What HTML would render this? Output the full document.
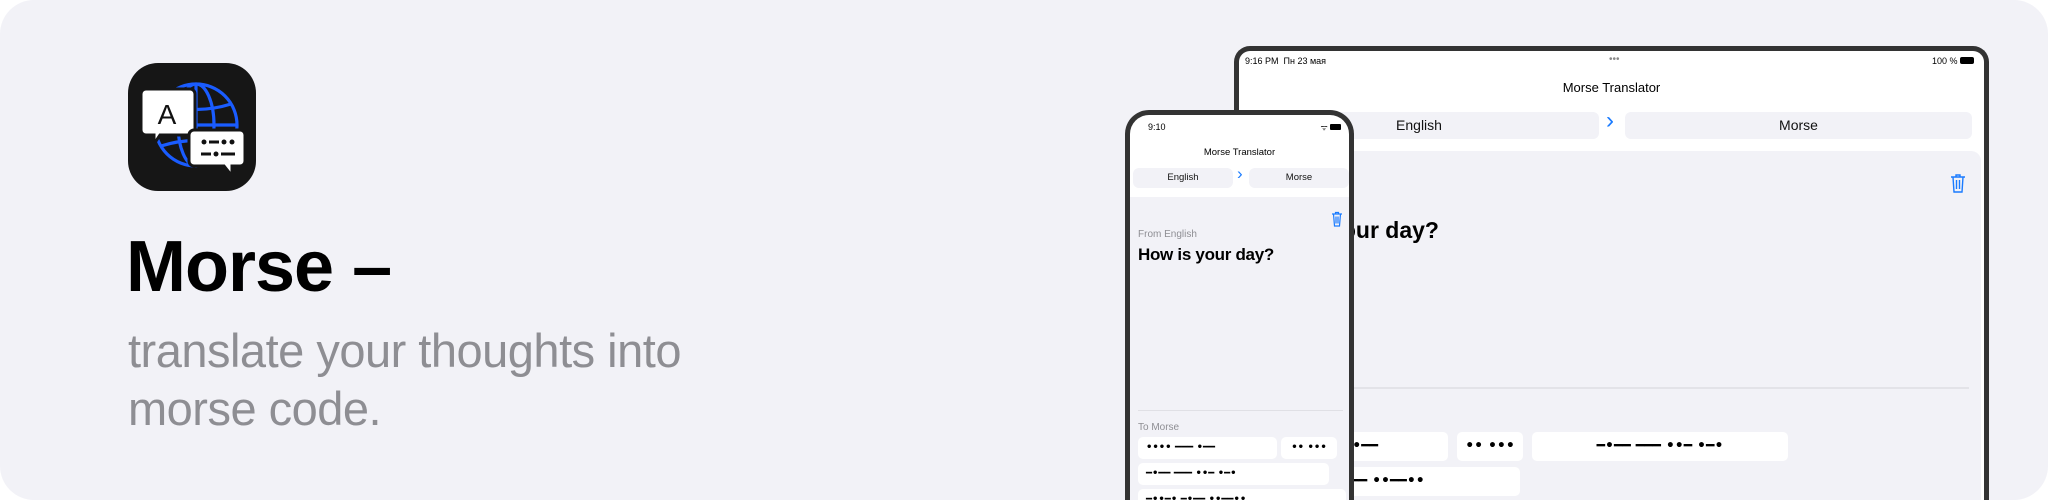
<!DOCTYPE html>
<html><head><meta charset="utf-8"><style>
*{margin:0;padding:0;box-sizing:border-box}
html,body{width:2048px;height:500px;overflow:hidden}
body{background:#fff;font-family:"Liberation Sans",sans-serif}
.bg{position:absolute;left:0;top:0;width:2048px;height:500px;background:#f2f2f7;border-radius:34px;overflow:hidden}
.abs{position:absolute}
.t{position:absolute;white-space:nowrap}
.chip{position:absolute;background:#fff;border-radius:5px;color:#000;white-space:nowrap;font-family:"DejaVu Sans",sans-serif;font-weight:bold;overflow:hidden}
.seg{position:absolute;background:#f2f2f7;border-radius:6px;text-align:center;color:#111}
</style></head><body><div class="bg">

<svg class="abs" style="left:128px;top:63px" width="128" height="128" viewBox="0 0 128 128">
<rect width="128" height="128" rx="30" fill="#161616"/>
<g fill="none" stroke="#1a5cff" stroke-width="3.2">
<circle cx="68" cy="62" r="41"/>
<ellipse cx="68" cy="62" rx="18" ry="41"/>
<line x1="68" y1="21" x2="68" y2="103"/>
<line x1="27" y1="62" x2="109" y2="62"/>
<path d="M33 41 Q68 52 103 41"/><path d="M33 83 Q68 72 103 83"/>
</g>
<path d="M18 26 h44 a5 5 0 0 1 5 5 v36 a5 5 0 0 1 -5 5 h-30 l-6 9 v-9 h-8 a5 5 0 0 1 -5 -5 v-36 a5 5 0 0 1 5 -5z" fill="#fff" stroke="#161616" stroke-width="3"/>
<text x="39" y="61" font-family="Liberation Sans" font-size="28" text-anchor="middle" fill="#111">A</text>
<path d="M66 67 h46 a5 5 0 0 1 5 5 v26 a5 5 0 0 1 -5 5 h-8 v10 l-8 -10 h-30 a5 5 0 0 1 -5 -5 v-26 a5 5 0 0 1 5 -5z" fill="#fff" stroke="#161616" stroke-width="3"/>
<g fill="#111"><circle cx="76" cy="79" r="2.5"/><rect x="81" y="77.5" width="10" height="3"/><circle cx="96" cy="79" r="2.5"/><circle cx="104" cy="79" r="2.5"/>
<rect x="73" y="89.5" width="10" height="3"/><circle cx="88" cy="91" r="2.5"/><rect x="93" y="89.5" width="14" height="3"/></g>
</svg>

<div class="t" style="left:126px;top:226px;font-size:72px;font-weight:bold;color:#000;letter-spacing:-1px">Morse –</div>
<div class="t" style="left:128px;top:322px;font-size:47px;color:#8e8e93;line-height:58px;letter-spacing:-0.5px">translate your thoughts into<br>morse code.</div>

<!-- iPad -->
<div class="abs" style="left:1234px;top:46px;width:755px;height:454px;border:5px solid #333;border-bottom:0;border-radius:16px 16px 0 0;background:#fff;overflow:hidden">
 <div class="t" style="left:6px;top:5px;font-size:9px">9:16 PM&nbsp; Пн 23 мая</div>
 <div class="t" style="left:370px;top:3px;font-size:10px;color:#888">•••</div>
 <div class="t" style="right:10px;top:5px;font-size:9px">100 % <span style="display:inline-block;width:14px;height:7px;background:#000;border-radius:2px"></span></div>
 <div class="t" style="left:0;width:745px;text-align:center;top:29px;font-size:13px">Morse Translator</div>
 <div class="seg" style="left:0;width:360px;top:61px;height:27px;line-height:27px;font-size:14px">English</div>
 <div class="t" style="left:367px;top:56px;font-size:24px;color:#1a7bff">›</div>
 <div class="seg" style="left:386px;width:347px;top:61px;height:27px;line-height:27px;font-size:14px">Morse</div>
 <div class="abs" style="left:0;top:100px;width:742px;height:400px;background:#f2f2f7;border-radius:10px 10px 0 0"></div>
 <svg class="abs" style="left:711px;top:122px" width="16" height="20" viewBox="0 0 16 20" fill="none" stroke="#1a7bff" stroke-width="1.4"><path d="M1 4h14M6 4V2h4v2M3 4l1 15h8l1-15M6.5 7v9M9.5 7v9"/></svg>
 <div class="t" style="right:545px;top:166px;font-size:23px;font-weight:bold;text-align:right">How is your day?</div>
 <div class="abs" style="left:60px;top:336px;width:670px;height:2px;background:#e3e3e8"></div>
 <div class="chip" style="left:60px;top:381px;width:149px;height:29px;line-height:29px;font-size:14px;padding-left:40px">━ •━━</div>
 <div class="chip" style="left:218px;top:381px;width:66px;height:29px;line-height:29px;font-size:14px;text-align:center">•• •••</div>
 <div class="chip" style="left:293px;top:381px;width:256px;height:29px;line-height:29px;font-size:14px;text-align:center">━•━━ ━━━ ••━ •━•</div>
 <div class="chip" style="left:60px;top:416px;width:221px;height:29px;line-height:29px;font-size:14px;padding-left:34px">━•━━ ••━━••</div>
</div>

<!-- iPhone -->
<div class="abs" style="left:1125px;top:110px;width:229px;height:390px;border:5px solid #333;border-bottom:0;border-radius:24px 24px 0 0;background:#fff;overflow:hidden">
 <div class="t" style="left:18px;top:7px;font-size:9px">9:10</div>
 <div class="t" style="right:8px;top:7px;font-size:8px">ᯤ <span style="display:inline-block;width:11px;height:6px;background:#000;border-radius:1px"></span></div>
 <div class="t" style="left:0;width:219px;text-align:center;top:32px;font-size:9.5px">Morse Translator</div>
 <div class="seg" style="left:3px;width:100px;top:53px;height:20px;line-height:20px;font-size:9.5px">English</div>
 <div class="t" style="left:107px;top:49px;font-size:17px;color:#1a7bff">›</div>
 <div class="seg" style="left:119px;width:100px;top:53px;height:20px;line-height:20px;font-size:9.5px">Morse</div>
 <div class="abs" style="left:0;top:82px;width:219px;height:308px;background:#f2f2f7"></div>
 <svg class="abs" style="left:201px;top:96px" width="12" height="16" viewBox="0 0 12 16" fill="none" stroke="#1a7bff" stroke-width="1.2"><path d="M1 3h10M4.5 3V1.5h3V3M2.5 3l1 12h5l1-12M5 5.5v7M7 5.5v7"/></svg>
 <div class="t" style="left:8px;top:114px;font-size:10px;color:#8e8e93">From English</div>
 <div class="t" style="left:8px;top:130px;font-size:17px;font-weight:bold;letter-spacing:-0.3px">How is your day?</div>
 <div class="abs" style="left:8px;top:295px;width:205px;height:1px;background:#e0e0e5"></div>
 <div class="t" style="left:8px;top:307px;font-size:10px;color:#8e8e93">To Morse</div>
 <div class="chip" style="left:8px;top:322px;width:139px;height:22px;line-height:22px;font-size:10px;padding-left:8px">•••• ━━━ •━━</div>
 <div class="chip" style="left:151px;top:322px;width:56px;height:22px;line-height:22px;font-size:10px;text-align:center">•• •••</div>
 <div class="chip" style="left:8px;top:348px;width:191px;height:22px;line-height:22px;font-size:10px;padding-left:8px">━•━━ ━━━ ••━ •━•</div>
 <div class="chip" style="left:8px;top:374px;width:208px;height:16px;line-height:22px;font-size:10px;padding-left:8px;border-radius:5px 5px 0 0">━••━• ━•━━ ••━━••</div>
</div>

</div></body></html>
